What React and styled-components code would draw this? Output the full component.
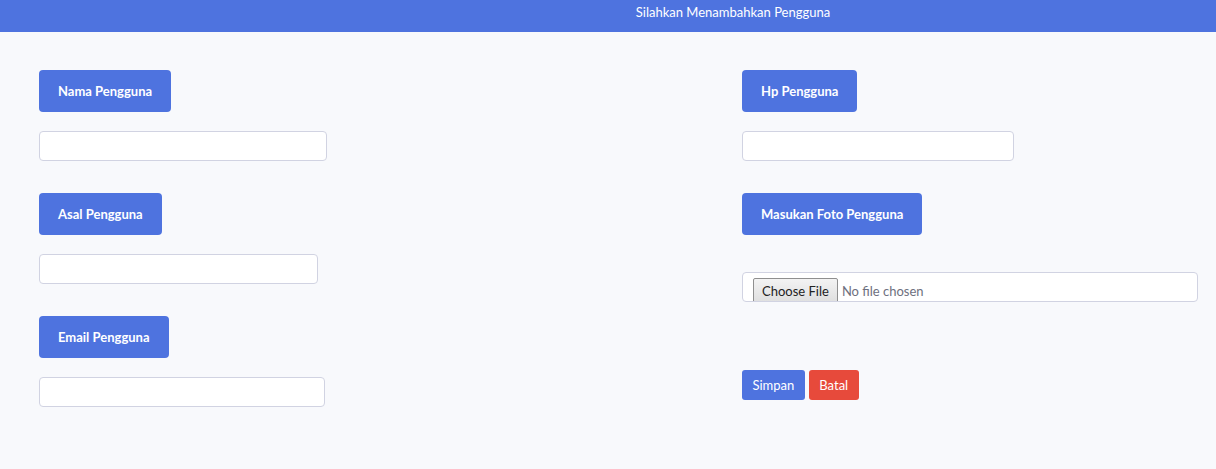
import styled, { createGlobalStyle } from "styled-components"

const GlobalStyle = createGlobalStyle`
    * {
        box-sizing: border-box;
    }

    body {
        margin: 0;
        background: #f8f9fc;
        font-family: Lato, "Open Sans", sans-serif;
        color: #858796;
    }
`

const leftFields = [
    { label: "Nama Pengguna", width: 288 },
    { label: "Asal Pengguna", width: 279 },
    { label: "Email Pengguna", width: 286 },
]

export default function App() {
    return (
        <>
            <GlobalStyle />
            <TopBar>Silahkan Menambahkan Pengguna</TopBar>
            <Form onSubmit={e => e.preventDefault()}>
                <Column>
                    {leftFields.map(field => (
                        <Field key={field.label}>
                            <Label>{field.label}</Label>
                            <Input type="text" $width={field.width} />
                        </Field>
                    ))}
                </Column>

                <Column>
                    <Field>
                        <Label>Hp Pengguna</Label>
                        <Input type="text" $width={272} />
                    </Field>
                    <Field $gap={37}>
                        <Label>Masukan Foto Pengguna</Label>
                        <FileInput type="file" />
                    </Field>
                    <Actions>
                        <Button type="submit">Simpan</Button>
                        <Button type="button" $danger>Batal</Button>
                    </Actions>
                </Column>
            </Form>
        </>
    )
}

const TopBar = styled.header`
    height: 32px;
    padding: 4px 0 0 250px;
    background: #4e73df;
    color: #fff;
    font-size: 13px;
    line-height: 16px;
    text-align: center;
`

const Form = styled.form`
    display: grid;
    grid-template-columns: 703px 1fr;
    padding: 38px 18px 40px 39px;
`

const Column = styled.div`
    display: flex;
    flex-direction: column;
    align-items: flex-start;
`

const Field = styled.div`
    display: flex;
    flex-direction: column;
    align-items: flex-start;
    width: 100%;
    gap: ${props => props.$gap || 19}px;
    margin-bottom: 32px;
`

const Label = styled.div`
    display: flex;
    align-items: center;
    height: 42px;
    padding: 0 19px;
    border-radius: 4px;
    background: #4e73df;
    color: #fff;
    font-size: 13px;
    font-weight: 700;
`

const Input = styled.input`
    width: ${props => props.$width}px;
    height: 30px;
    padding: 0 10px;
    border: 1px solid #d1d3e2;
    border-radius: 4px;
    background: #fff;
    outline: none;
`

const FileInput = styled.input`
    width: 100%;
    height: 30px;
    padding: 5px 0 0 10px;
    border: 1px solid #d1d3e2;
    border-radius: 4px;
    background: #fff;
    color: #6e707e;
    font-family: Lato, sans-serif;
    font-size: 13px;
    overflow: hidden;

    &::file-selector-button {
        height: 26px;
        margin: 0 4px 0 0;
        padding: 0 8px;
        border: 1px solid #8f8f8f;
        border-radius: 2px;
        background: linear-gradient(#f3f3f3, #dedede);
        color: #222;
        font-family: Lato, sans-serif;
        font-size: 13px;
    }
`

const Actions = styled.div`
    display: flex;
    gap: 4px;
    margin-top: 36px;
`

const Button = styled.button`
    height: 30px;
    padding: 0 10.5px;
    border: none;
    border-radius: 3px;
    background: ${props => props.$danger ? "#e74a3b" : "#4e73df"};
    color: #fff;
    font-family: Lato, sans-serif;
    font-size: 13px;
    cursor: pointer;
`
